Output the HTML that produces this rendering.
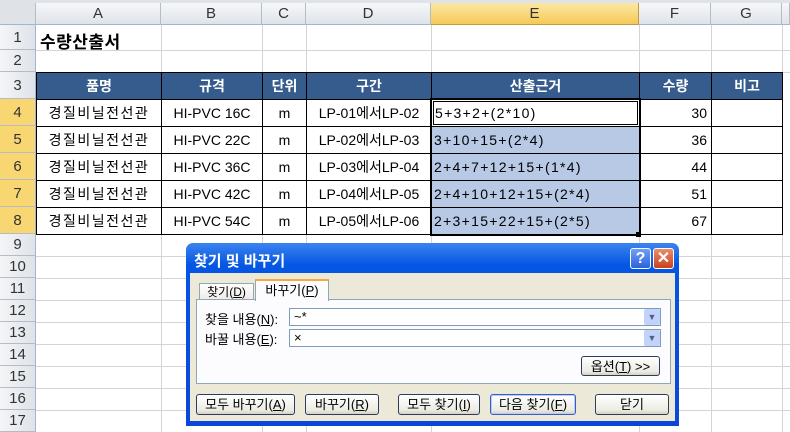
<!DOCTYPE html><html><head><meta charset="utf-8"><style>
*{margin:0;padding:0;box-sizing:border-box}
body{width:790px;height:432px;overflow:hidden;background:#fff;font-family:"Liberation Sans","Noto Sans CJK KR",sans-serif;position:relative;font-size:14px;color:#000}
.a{position:absolute}
.ch{position:absolute;top:3px;height:22px;background:linear-gradient(#f6f7f9,#dfe3e8);border-right:1px solid #b5bcc7;border-bottom:1px solid #9eb6ce;text-align:center;line-height:22px;font-size:15px;color:#333}
.rh{position:absolute;left:0;width:36px;background:linear-gradient(90deg,#f4f5f7,#dfe3e8);border-bottom:1px solid #b5bcc7;border-right:1px solid #9eb6ce;text-align:center;font-size:15px;color:#333}
.vl{position:absolute;top:25px;width:1px;height:407px;background:#d4d4d4}
.hl{position:absolute;left:36px;width:754px;height:1px;background:#d4d4d4}
.c{position:absolute;border:1px solid #000;line-height:26px;font-size:14px;padding:0 4px;white-space:nowrap;overflow:hidden}
.hd{background:#365c8e;color:#fff;text-align:center;font-weight:bold;font-size:14px}
.btn{position:absolute;top:394px;height:21px;border:1px solid #2c3c5c;border-radius:3px;background:linear-gradient(#fff,#ecebe4 80%,#d6d2c2);font-size:13px;text-align:center;line-height:19px}
</style></head><body>
<div class="a" style="left:0;top:0;width:790px;height:3px;background:#dfe3e8"></div>
<div class="ch" style="left:0;width:36px;background:#dfe3e8"></div>
<div class="ch" style="left:36px;width:125px">A</div>
<div class="ch" style="left:161px;width:101px">B</div>
<div class="ch" style="left:262px;width:44px">C</div>
<div class="ch" style="left:306px;width:125px">D</div>
<div class="ch" style="left:431px;width:208px;background:linear-gradient(#fbe8a4,#f6c958);border-color:#c29b3e">E</div>
<div class="ch" style="left:639px;width:72px">F</div>
<div class="ch" style="left:711px;width:71px">G</div>
<div class="ch" style="left:782px;width:8px"></div>
<div class="vl" style="left:161px"></div><div class="vl" style="left:262px"></div><div class="vl" style="left:306px"></div><div class="vl" style="left:431px"></div><div class="vl" style="left:639px"></div><div class="vl" style="left:711px"></div><div class="vl" style="left:782px"></div>
<div class="hl" style="top:50px"></div><div class="hl" style="top:72px"></div><div class="hl" style="top:256px"></div><div class="hl" style="top:278px"></div><div class="hl" style="top:300px"></div><div class="hl" style="top:322px"></div><div class="hl" style="top:344px"></div><div class="hl" style="top:366px"></div><div class="hl" style="top:388px"></div><div class="hl" style="top:410px"></div>
<div class="rh" style="top:25px;height:25px;line-height:25px">1</div>
<div class="rh" style="top:50px;height:22px;line-height:22px">2</div>
<div class="rh" style="top:72px;height:27px;line-height:27px">3</div>
<div class="rh" style="top:99px;height:27px;line-height:27px;background:#f8d773">4</div>
<div class="rh" style="top:126px;height:27px;line-height:27px;background:#f8d773">5</div>
<div class="rh" style="top:153px;height:27px;line-height:27px;background:#f8d773">6</div>
<div class="rh" style="top:180px;height:27px;line-height:27px;background:#f8d773">7</div>
<div class="rh" style="top:207px;height:27px;line-height:27px;background:#f8d773">8</div>
<div class="rh" style="top:234px;height:22px;line-height:22px">9</div>
<div class="rh" style="top:256px;height:22px;line-height:22px">10</div>
<div class="rh" style="top:278px;height:22px;line-height:22px">11</div>
<div class="rh" style="top:300px;height:22px;line-height:22px">12</div>
<div class="rh" style="top:322px;height:22px;line-height:22px">13</div>
<div class="rh" style="top:344px;height:22px;line-height:22px">14</div>
<div class="rh" style="top:366px;height:22px;line-height:22px">15</div>
<div class="rh" style="top:388px;height:22px;line-height:22px">16</div>
<div class="rh" style="top:410px;height:22px;line-height:22px">17</div>
<div class="a" style="left:40px;top:28px;font-size:17px;font-weight:bold;letter-spacing:0.5px">수량산출서</div>
<div class="a" style="left:36px;top:72px;width:747px;height:163px;background:#fff;border:1px solid #000"></div>
<div class="a" style="left:432px;top:126px;width:207px;height:108px;background:#b8c9e5"></div>
<div id="t"></div>
<script>
var xs=[36,161,262,306,431,639,711,782],ys=[72,99,126,153,180,207,234];
var H=["품명","규격","단위","구간","산출근거","수량","비고"];
var R=[["HI-PVC 16C","LP-01에서LP-02","5+3+2+(2*10)","30"],["HI-PVC 22C","LP-02에서LP-03","3+10+15+(2*4)","36"],["HI-PVC 36C","LP-03에서LP-04","2+4+7+12+15+(1*4)","44"],["HI-PVC 42C","LP-04에서LP-05","2+4+10+12+15+(2*4)","51"],["HI-PVC 54C","LP-05에서LP-06","2+3+15+22+15+(2*5)","67"]];
var s="";
for(var r=0;r<6;r++)for(var c=0;c<7;c++){var x=xs[c],w=xs[c+1]-x+1,y=ys[r],h=28,cls="c",st="",t="";
if(r==0){cls+=" hd";t=H[c];}else{var d=R[r-1];t=["경질비닐전선관",d[0],"m",d[1],d[2],d[3],""][c];st=c==4?"text-align:left;letter-spacing:1.3px;padding-left:2px;":c==5?"text-align:right;":"text-align:center;";if(c==0)st+="letter-spacing:1.5px;";if(c==4)st+="background:"+(r>1?"#b8c9e5":"transparent")+";"}
s+='<div class="'+cls+'" style="left:'+x+'px;top:'+y+'px;width:'+w+'px;height:'+h+'px;'+st+'">'+t+'</div>';}
document.getElementById("t").innerHTML=s;
</script>
<div class="a" style="left:430px;top:98px;width:211px;height:138px;border:2px solid #000"></div>
<div class="a" style="left:433px;top:101px;width:205px;height:24px;border:1px solid #000;background:#fff"></div>
<div class="a" style="left:435px;top:101px;line-height:24px;font-size:14px;letter-spacing:1.3px">5+3+2+(2*10)</div>
<div class="a" style="left:636px;top:232px;width:5px;height:5px;background:#000"></div>
<div class="a" style="left:186px;top:243px;width:493px;height:183px;border-radius:7px 7px 0 0;background:linear-gradient(#3b83f0,#0556e3 12%,#0a47d6)"></div>
<div class="a" style="left:194px;top:250px;color:#fff;font-weight:bold;font-size:15px">찾기 및 바꾸기</div>
<div class="a" style="left:630px;top:248px;width:21px;height:21px;border:1px solid #fff;border-radius:3px;background:linear-gradient(#6fa0f6,#2b62d9);color:#fff;font-weight:bold;text-align:center;line-height:19px;font-size:16px">?</div>
<div class="a" style="left:653px;top:248px;width:21px;height:21px;border:1px solid #fff;border-radius:3px;background:linear-gradient(#ea8d6c,#c9421c);color:#fff;font-weight:bold;text-align:center;line-height:19px;font-size:16px">✕</div>
<div class="a" style="left:190px;top:273px;width:485px;height:148px;background:#ece9d8"></div>
<div class="a" style="left:199px;top:283px;width:55px;height:17px;border:1px solid #91a7b4;border-bottom:none;background:linear-gradient(#fff,#ecebe6);font-size:12px;text-align:center;line-height:16px">찾기(<u>D</u>)</div>
<div class="a" style="left:255px;top:279px;width:74px;height:22px;border:1px solid #91a7b4;border-top:2px solid #f3a93b;border-bottom:none;background:#fcfcfe;font-size:13px;text-align:center;line-height:19px;z-index:2">바꾸기(<u>P</u>)</div>
<div class="a" style="left:196px;top:299px;width:475px;height:85px;border:1px solid #91a7b4;background:#fcfcfe"></div>
<div class="a" style="left:205px;top:309px;font-size:13px">찾을 내용(<u>N</u>):</div>
<div class="a" style="left:205px;top:329px;font-size:13px">바꿀 내용(<u>E</u>):</div>
<div class="a" style="left:289px;top:308px;width:372px;height:18px;border:1px solid #7f9db9;background:#fff;font-size:13px;padding-left:4px;line-height:16px">~*</div>
<div class="a" style="left:289px;top:329px;width:372px;height:18px;border:1px solid #7f9db9;background:#fff;font-size:13px;padding-left:4px;line-height:16px">×</div>
<div class="a" style="left:644px;top:309px;width:16px;height:16px;background:#c1d3fb;border-radius:2px;color:#4d6185;font-size:9px;text-align:center;line-height:16px">▼</div>
<div class="a" style="left:644px;top:330px;width:16px;height:16px;background:#c1d3fb;border-radius:2px;color:#4d6185;font-size:9px;text-align:center;line-height:16px">▼</div>
<div class="btn" style="left:581px;top:356px;width:79px;height:20px">옵션(<u>T</u>) &gt;&gt;</div>
<div class="btn" style="left:196px;width:99px">모두 바꾸기(<u>A</u>)</div>
<div class="btn" style="left:305px;width:74px">바꾸기(<u>R</u>)</div>
<div class="btn" style="left:398px;width:82px">모두 찾기(<u>I</u>)</div>
<div class="btn" style="left:490px;width:86px;border-color:#3c5dbf;box-shadow:inset 0 0 0 1px #b8cdf6">다음 찾기(<u>F</u>)</div>
<div class="btn" style="left:595px;width:74px">닫기</div>
</body></html>
